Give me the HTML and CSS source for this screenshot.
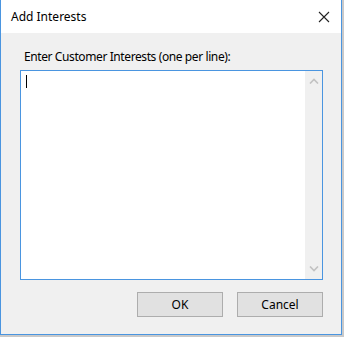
FILE: index.html
```html
<!DOCTYPE html>
<html lang="en">
<head>
    <meta charset="UTF-8">
    <title>Add Interests</title>
    <link rel="stylesheet" href="styles.css">
</head>
<body>

    <div class="dialog">
        <div class="titlebar">
            <span class="title">Add Interests</span>
            <svg class="close" width="12" height="12" viewBox="0 0 12 12">
                <path d="M1 1 L11 11 M11 1 L1 11" stroke="#222" stroke-width="1.1" fill="none"/>
            </svg>
        </div>

        <div class="content">
            <div class="label">Enter Customer Interests (one per line):</div>
            <div class="editbox">
                <div class="text-area"><span class="caret"></span></div>
                <div class="scrollbar">
                    <svg width="10" height="6" viewBox="0 0 10 6">
                        <path d="M1 5.5 L5 1.5 L9 5.5" stroke="#c2c2c2" stroke-width="1.6" fill="none"/>
                    </svg>
                    <svg width="10" height="6" viewBox="0 0 10 6">
                        <path d="M1 0.5 L5 4.5 L9 0.5" stroke="#c2c2c2" stroke-width="1.6" fill="none"/>
                    </svg>
                </div>
            </div>
            <div class="buttons">
                <button class="btn">OK</button>
                <button class="btn">Cancel</button>
            </div>
        </div>
    </div>

</body>
</html>
```

FILE: styles.css
```css
body {
    margin: 0;
    background-color: #c9c9c9;
    font-family: 'Noto Sans', 'Liberation Sans', sans-serif;
    font-size: 12px;
    color: #000;
}
.dialog {
    width: 342px;
    height: 335px;
    box-sizing: border-box;
    border: 1px solid #4a95e0;
    border-top: none;
    background-color: #f0f0f0;
    display: flex;
    flex-direction: column;
}
.titlebar {
    height: 33px;
    background-color: #fff;
    display: flex;
    align-items: center;
    justify-content: space-between;
    padding: 0 11px 0 10px;
}
.title {
    font-size: 12px;
    color: #000;
}
.close {
    display: block;
}
.content {
    flex: 1;
    padding: 16px 18px 0 19px;
}
.label {
    line-height: 16px;
    padding-left: 4px;
    margin-bottom: 5px;
    letter-spacing: -0.4px;
}
.editbox {
    height: 210px;
    box-sizing: border-box;
    border: 1px solid #4a95e0;
    background-color: #fff;
    display: flex;
}
.text-area {
    flex: 1;
    padding: 4px 5px;
}
.caret {
    display: block;
    width: 1px;
    height: 13px;
    background-color: #000;
}
.scrollbar {
    width: 17px;
    background-color: #f0f0f0;
    display: flex;
    flex-direction: column;
    justify-content: space-between;
    align-items: center;
    padding: 7px 0 7px;
}
.scrollbar svg {
    display: block;
}
.buttons {
    display: flex;
    justify-content: flex-end;
    gap: 14px;
    margin-top: 12px;
}
.btn {
    width: 86px;
    height: 25px;
    box-sizing: border-box;
    border: 1px solid #adadad;
    background-color: #e1e1e1;
    font-family: 'Noto Sans', 'Liberation Sans', sans-serif;
    font-size: 12px;
    color: #000;
    padding: 0;
}
```
